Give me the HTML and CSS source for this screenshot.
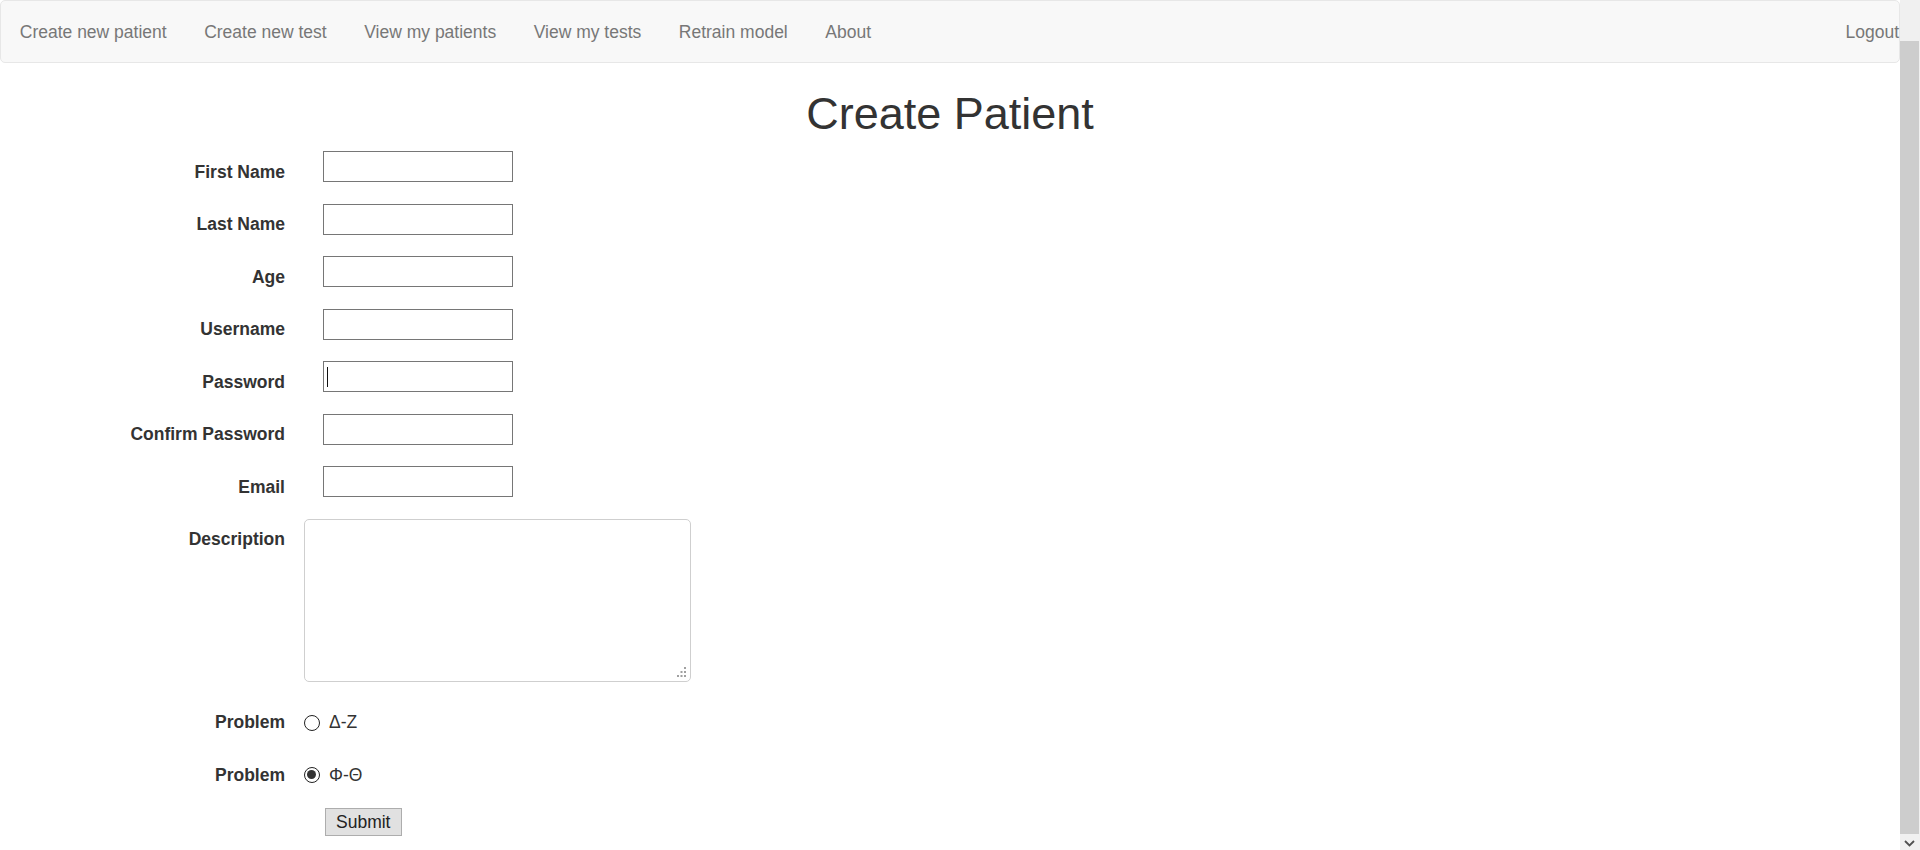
FILE: index.html
```html
<!DOCTYPE html>
<html lang="en">
<head>
<meta charset="utf-8">
<title>Create Patient</title>
<link rel="stylesheet" href="styles.css">
</head>
<body>
<div class="page">
  <nav class="navbar">
    <ul class="nav-left">
      <li><a href="#">Create new patient</a></li>
      <li><a href="#">Create new test</a></li>
      <li><a href="#">View my patients</a></li>
      <li><a href="#">View my tests</a></li>
      <li><a href="#">Retrain model</a></li>
      <li><a href="#">About</a></li>
    </ul>
    <ul class="nav-right">
      <li><a href="#">Logout</a></li>
    </ul>
  </nav>

  <h1 class="title">Create Patient</h1>

  <form class="form">
    <div class="row">
      <label class="lbl">First Name</label>
      <div class="ctrl"><input class="inp" type="text"></div>
    </div>
    <div class="row">
      <label class="lbl">Last Name</label>
      <div class="ctrl"><input class="inp" type="text"></div>
    </div>
    <div class="row">
      <label class="lbl">Age</label>
      <div class="ctrl"><input class="inp" type="text"></div>
    </div>
    <div class="row">
      <label class="lbl">Username</label>
      <div class="ctrl"><input class="inp" type="text"></div>
    </div>
    <div class="row">
      <label class="lbl">Password</label>
      <div class="ctrl"><span class="inp-wrap"><input class="inp" type="password"><span class="caret"></span></span></div>
    </div>
    <div class="row">
      <label class="lbl">Confirm Password</label>
      <div class="ctrl"><input class="inp" type="password"></div>
    </div>
    <div class="row">
      <label class="lbl">Email</label>
      <div class="ctrl"><input class="inp" type="email"></div>
    </div>
    <div class="row">
      <label class="lbl">Description</label>
      <div class="ctrl ctrl-area">
        <span class="area-wrap">
          <textarea class="area"></textarea>
          <svg class="grip" width="10" height="10" viewBox="0 0 10 10"><rect x="7" y="0" width="2" height="2"/><rect x="3.5" y="4" width="2" height="2"/><rect x="7" y="4" width="2" height="2"/><rect x="0" y="8" width="2" height="2"/><rect x="3.5" y="8" width="2" height="2"/><rect x="7" y="8" width="2" height="2"/></svg>
        </span>
      </div>
    </div>
    <div class="row">
      <label class="lbl">Problem</label>
      <div class="ctrl ctrl-radio"><input class="radio" type="radio" name="problem"><span>Δ-Z</span></div>
    </div>
    <div class="row">
      <label class="lbl">Problem</label>
      <div class="ctrl ctrl-radio"><input class="radio" type="radio" name="problem" checked><span>Φ-Θ</span></div>
    </div>
    <div class="row row-submit">
      <div class="lbl-empty"></div>
      <div class="ctrl ctrl-submit"><button class="btn" type="button">Submit</button></div>
    </div>
  </form>
</div>

<div class="scrollbar">
  <div class="thumb"></div>
  <svg class="arrow" width="11" height="7" viewBox="0 0 11 7"><polyline points="1,1 5.5,5.5 10,1" fill="none" stroke="#505050" stroke-width="1.8"/></svg>
</div>
</body>
</html>
```

FILE: styles.css
```css
html, body {
  margin: 0;
  padding: 0;
  height: 850px;
  overflow: hidden;
  background: #fff;
}

body {
  font-family: "Liberation Sans", Arial, Helvetica, sans-serif;
  font-size: 17.5px;
  line-height: 25px;
  color: #333;
}

.page {
  width: 1900px;
}

/* navbar */
.navbar {
  box-sizing: border-box;
  height: 63px;
  background: #f8f8f8;
  border: 1px solid #e7e7e7;
  border-radius: 5px;
  display: flex;
  justify-content: space-between;
}

.nav-left, .nav-right {
  list-style: none;
  margin: 0;
  padding: 0;
  display: flex;
}

.nav-left a {
  display: block;
  padding: 18.75px 18.75px;
  line-height: 25px;
  color: #777;
  text-decoration: none;
}

.nav-right a {
  display: block;
  padding: 18.75px 0 18.75px 18.75px;
  line-height: 25px;
  color: #777;
  text-decoration: none;
}

/* title */
.title {
  margin: 26px 0 12.5px;
  font-size: 45px;
  line-height: 49.5px;
  font-weight: 500;
  text-align: center;
  color: #333;
}

/* form */
.form {
  display: flex;
  flex-direction: column;
  margin: 0;
}

.row {
  display: flex;
  align-items: flex-start;
  min-height: 33.75px;
  margin-bottom: 18.75px;
}

.lbl, .lbl-empty {
  flex: none;
  width: 285px;
  box-sizing: border-box;
  padding-top: 8.75px;
  line-height: 25px;
  text-align: right;
  font-weight: bold;
  color: #333;
}

.ctrl {
  margin-left: 9px;
}

.inp-wrap {
  position: relative;
  display: inline-block;
  margin-left: 29px;
}

.ctrl > .inp {
  margin-left: 29px;
}

.inp {
  display: block;
  box-sizing: border-box;
  width: 190px;
  height: 31px;
  border: 1px solid #767676;
  border-radius: 0;
  background: #fff;
  padding: 0 3px;
  font: inherit;
  outline: none;
}

.caret {
  position: absolute;
  left: 4px;
  top: 6px;
  width: 1px;
  height: 20px;
  background: #111;
}

.area-wrap {
  position: relative;
  display: block;
  margin-left: 10px;
}

.area {
  display: block;
  box-sizing: border-box;
  width: 387px;
  height: 163px;
  border: 1px solid #cfcfcf;
  border-radius: 5px;
  resize: none;
  font: inherit;
  outline: none;
  margin: 0 0 1px;
}

.grip {
  position: absolute;
  right: 4px;
  bottom: 5px;
  fill: #a0a0a0;
}

.ctrl-radio {
  display: flex;
  align-items: center;
  padding-top: 8.75px;
  height: 25px;
  margin-left: 19px;
}

.radio {
  -webkit-appearance: none;
  appearance: none;
  box-sizing: border-box;
  width: 16px;
  height: 16px;
  margin: 0 9px 0 0;
  border: 1.3px solid #222;
  border-radius: 50%;
  background: #fff;
  position: relative;
  flex: none;
}

.radio:checked::after {
  content: "";
  position: absolute;
  left: 2.2px;
  top: 2.2px;
  width: 9px;
  height: 9px;
  border-radius: 50%;
  background: #333;
}

.ctrl-submit {
  padding-top: 2px;
  margin-left: 39.5px;
}

.btn {
  box-sizing: border-box;
  height: 28px;
  padding: 0 10.5px;
  background: #e1e1e1;
  border: 1px solid #adadad;
  border-radius: 0;
  font: inherit;
  line-height: 26px;
  color: #222;
}

/* fake scrollbar overlay */
.scrollbar {
  position: fixed;
  top: 0;
  right: 0;
  width: 20px;
  height: 850px;
  background: #f0f0f0;
}

.thumb {
  position: absolute;
  left: 0;
  top: 41px;
  width: 19px;
  height: 793px;
  background: #cdcdcd;
}

.arrow {
  position: absolute;
  left: 4px;
  top: 840px;
}
```
